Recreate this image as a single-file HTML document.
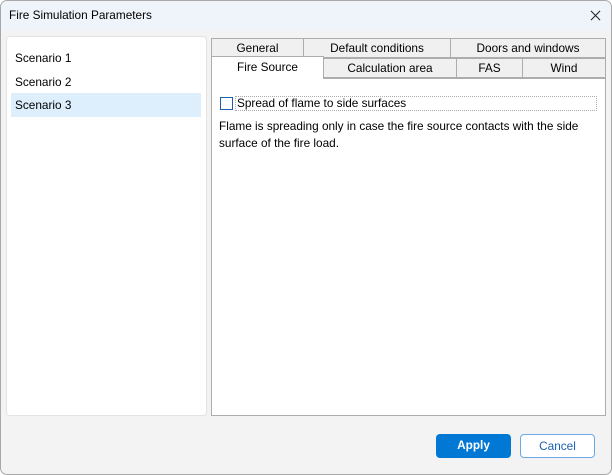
<!DOCTYPE html>
<html><head><style>
body{margin:0;width:612px;height:475px;overflow:hidden;font-family:"Segoe UI","Liberation Sans",sans-serif;font-size:11.8px;color:#000}
.win{position:absolute;left:0;top:0;width:612px;height:475px;box-sizing:border-box;border:1px solid #a8a8a8;border-radius:7px;background:#f3f3f3;overflow:hidden}
.abs{position:absolute;left:-1px;top:-1px;width:612px;height:475px}
.title{position:absolute;left:0;top:0;width:612px;height:31px;background:#eef4f9}
.title span{position:absolute;left:9px;top:8px}
.left{position:absolute;left:6px;top:36px;width:199px;height:378px;background:#fff;border:1px solid #e3e3e3;border-radius:4px}
.it{position:absolute;left:4px;width:190px;height:24px;line-height:24px;padding-left:4px;box-sizing:border-box}
.tab{position:absolute;height:20px;line-height:19px;text-align:center;background:#f0f0f0;border:1px solid #adadad;box-sizing:border-box}
.panel{position:absolute;left:211px;top:78px;width:395px;height:338px;background:#fff;border:1px solid #adadad;box-sizing:border-box}
.btn{position:absolute;top:434px;width:75px;height:24px;border-radius:4px;box-sizing:border-box;text-align:center;line-height:23px}
</style></head><body>
<div class="win"><div class="abs">
<div class="title"><span>Fire Simulation Parameters</span>
<svg style="position:absolute;left:590px;top:10px" width="11" height="11" viewBox="0 0 12 12"><path d="M1 1L11 11M11 1L1 11" stroke="#222" stroke-width="1.1"/></svg></div>
<div class="left">
<div class="it" style="top:9px">Scenario 1</div>
<div class="it" style="top:33px">Scenario 2</div>
<div class="it" style="top:56px;background:#ddeefc">Scenario 3</div>
</div>
<div class="panel">
<div style="position:absolute;left:8px;top:18px;width:13px;height:13px;border:1px solid #1a5fb4;box-sizing:border-box"></div>
<div style="position:absolute;left:23px;top:17px;width:362px;height:15px;border:1px dotted #aaa;box-sizing:border-box"></div>
<div style="position:absolute;left:25px;top:17px;line-height:15px">Spread of flame to side surfaces</div>
<div style="position:absolute;left:7px;top:39px;width:380px;line-height:17px">Flame is spreading only in case the fire source contacts with the side surface of the fire load.</div>
</div>
<div class="tab" style="left:211px;top:38px;width:93px">General</div>
<div class="tab" style="left:303px;top:38px;width:148px">Default conditions</div>
<div class="tab" style="left:450px;top:38px;width:156px">Doors and windows</div>
<div class="tab" style="left:323px;top:58px;width:134px">Calculation area</div>
<div class="tab" style="left:456px;top:58px;width:67px">FAS</div>
<div class="tab" style="left:522px;top:58px;width:84px">Wind</div>
<div class="tab" style="left:211px;top:56px;width:113px;height:23px;background:#fff;border-bottom:none;line-height:21px">Fire Source</div>
<div class="btn" style="left:436px;background:#0078d4;color:#fff;font-weight:bold">Apply</div>
<div class="btn" style="left:520px;background:#fff;border:1px solid #6aa8e6;color:#1a5fb4">Cancel</div>
</div></div>
</body></html>
